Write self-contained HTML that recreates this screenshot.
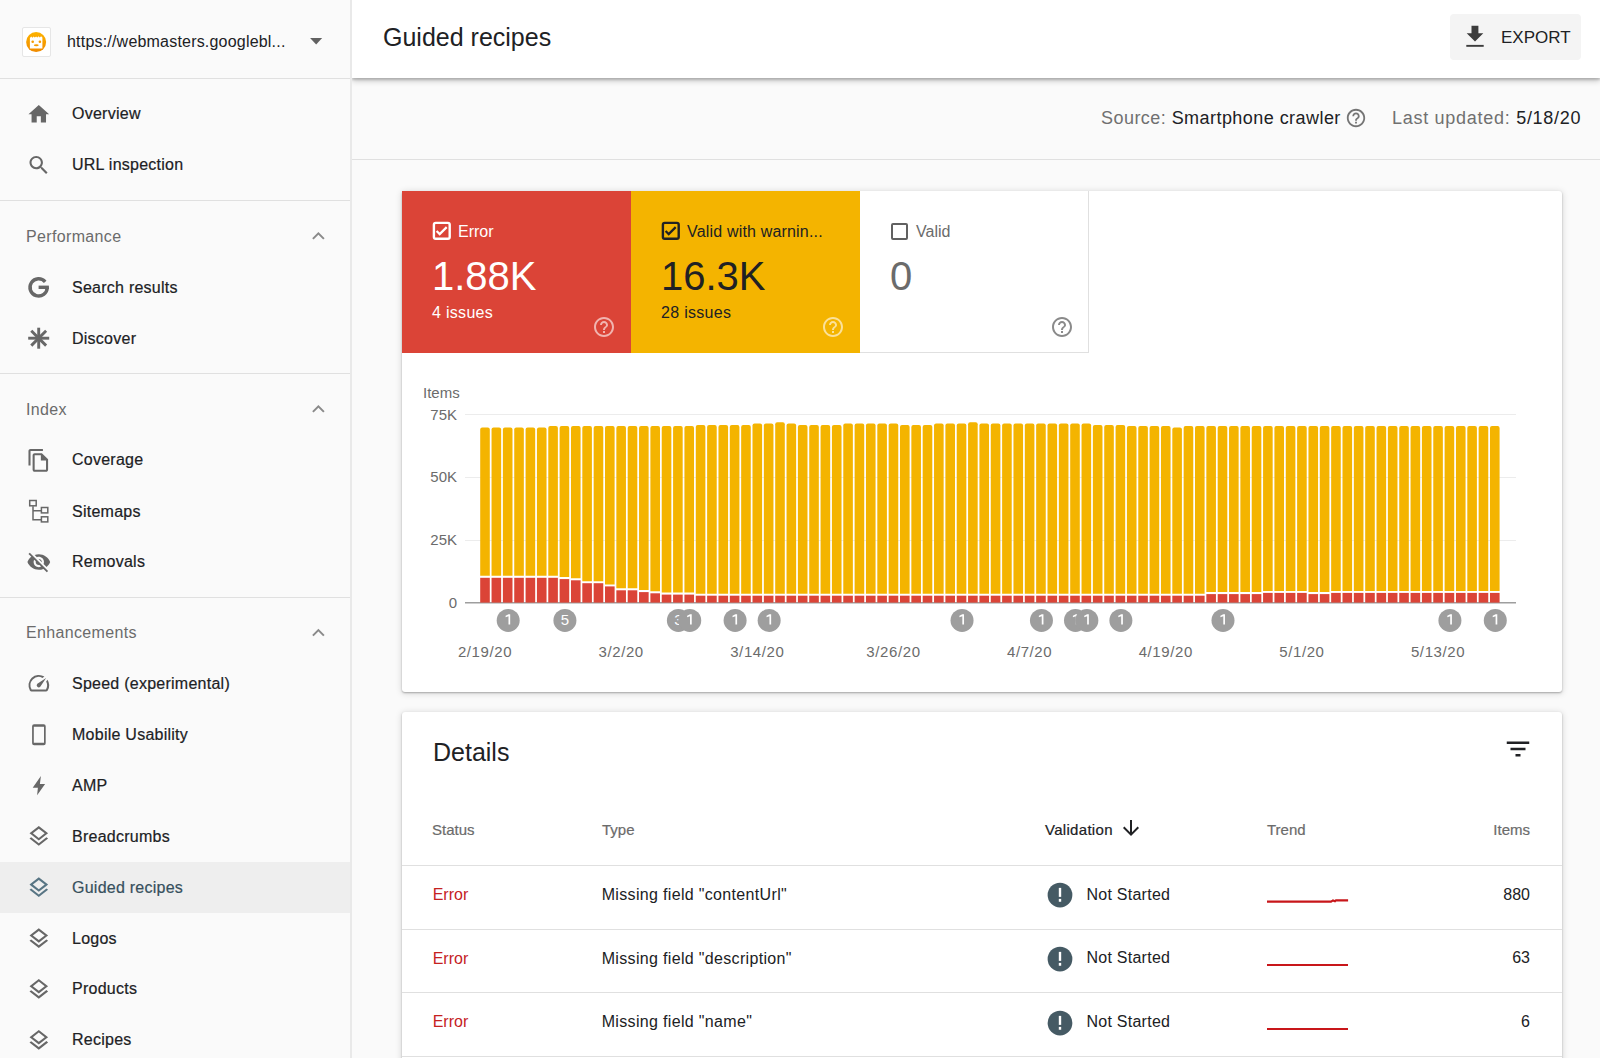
<!DOCTYPE html>
<html><head><meta charset="utf-8">
<style>
*{margin:0;padding:0;box-sizing:border-box}
html,body{width:1600px;height:1058px;overflow:hidden;background:#fafafa;font-family:"Liberation Sans",sans-serif;color:#202124}
.a{position:absolute;white-space:nowrap}
svg.i{position:absolute;fill:#616161}
#side{position:absolute;z-index:2;left:0;top:0;width:352px;height:1058px;background:#fafafa;border-right:2px solid #e9e9e9}
.hr{position:absolute;left:0;width:350px;height:1px;background:#e0e0e0}
.nav{position:absolute;left:72px;font-size:16px;line-height:20px;color:#202124;-webkit-text-stroke:0.2px #202124;letter-spacing:0.25px}
.sec{position:absolute;left:26px;font-size:16px;line-height:20px;color:#6b6b6b;letter-spacing:0.35px}
#hdr{position:absolute;left:352px;top:0;width:1248px;height:78px;background:#fff;box-shadow:0 2px 2px rgba(0,0,0,.16),0 3px 6px rgba(0,0,0,.2);z-index:1}
.card{position:absolute;background:#fff;box-shadow:0 1px 2px 0 rgba(0,0,0,.28),0 1px 6px 1px rgba(0,0,0,.12);border-radius:3px}
</style></head><body>
<div id="side">
  <div class="a" style="left:22px;top:27px;width:29px;height:30px;background:#fff;border:1px solid #e6e6e6;border-radius:2px"></div>
  <svg class="a" style="left:18px;top:22px" width="40" height="40" viewBox="18 22 40 40"><defs><linearGradient id="lg" x1="0" y1="0" x2="0" y2="1"><stop offset="0" stop-color="#fdb300"/><stop offset="1" stop-color="#f08a00"/></linearGradient></defs><circle cx="36.15" cy="42.1" r="10" fill="url(#lg)"/><path d="M29.9 48.6V37.9l1.3-1.3 1.2 1.1 1.2-1.2 1.2 1.1 1.3-1.2 1.2 1.1 1.3-1.2 1.2 1.1 1.3-1.2 1.3 1.3V48.6z" fill="#fff"/><circle cx="32.7" cy="41.7" r="1.3" fill="#f59a00"/><circle cx="39.9" cy="41.7" r="1.3" fill="#f59a00"/><ellipse cx="36.3" cy="45.25" rx="2.4" ry="1.05" fill="#f59a00"/></svg>
  <div class="a" style="left:67px;top:31.5px;font-size:16px;line-height:20px;letter-spacing:0.2px">https://webmasters.googlebl...</div>
  <svg class="i" style="left:304px;top:28px" width="24" height="24" viewBox="0 0 24 24"><path d="M7 10l5 5 5-5z"/></svg>
  <div class="hr" style="top:78px"></div>

  <div class="nav" style="top:104.4px;color:#202124;-webkit-text-stroke-color:#202124">Overview</div>
<div class="nav" style="top:155.4px;color:#202124;-webkit-text-stroke-color:#202124">URL inspection</div>
<div class="hr" style="top:200px"></div>
<div class="sec" style="top:226.7px">Performance</div>
<div class="nav" style="top:278.1px;color:#202124;-webkit-text-stroke-color:#202124">Search results</div>
<div class="nav" style="top:329.1px;color:#202124;-webkit-text-stroke-color:#202124">Discover</div>
<div class="hr" style="top:373px"></div>
<div class="sec" style="top:399.7px">Index</div>
<div class="nav" style="top:450.4px;color:#202124;-webkit-text-stroke-color:#202124">Coverage</div>
<div class="nav" style="top:501.8px;color:#202124;-webkit-text-stroke-color:#202124">Sitemaps</div>
<div class="nav" style="top:552.4px;color:#202124;-webkit-text-stroke-color:#202124">Removals</div>
<div class="hr" style="top:597px"></div>
<div class="sec" style="top:623.4px">Enhancements</div>
<div class="nav" style="top:674.1px;color:#202124;-webkit-text-stroke-color:#202124">Speed (experimental)</div>
<div class="nav" style="top:725.2px;color:#202124;-webkit-text-stroke-color:#202124">Mobile Usability</div>
<div class="nav" style="top:775.9px;color:#202124;-webkit-text-stroke-color:#202124">AMP</div>
<div class="nav" style="top:827.0px;color:#202124;-webkit-text-stroke-color:#202124">Breadcrumbs</div>
<div class="a" style="left:0;top:861.7px;width:350px;height:51px;background:#eeeeee"></div>
<div class="nav" style="top:877.6px;color:#37505d;-webkit-text-stroke-color:#37505d">Guided recipes</div>
<div class="nav" style="top:928.7px;color:#202124;-webkit-text-stroke-color:#202124">Logos</div>
<div class="nav" style="top:979.4px;color:#202124;-webkit-text-stroke-color:#202124">Products</div>
<div class="nav" style="top:1030.4px;color:#202124;-webkit-text-stroke-color:#202124">Recipes</div>
<svg class="a" style="left:0;top:0" width="350" height="1058" viewBox="0 0 350 1058"><g transform="translate(26.4 101.8) scale(1.033)" fill="#676767" ><path d="M10 20v-6h4v6h5v-8h3L12 3 2 12h3v8z"/></g><g transform="translate(26.4 152.8) scale(1.033)" fill="#676767" ><path d="M15.5 14h-.79l-.28-.27C15.41 12.59 16 11.11 16 9.5 16 5.91 13.09 3 9.5 3S3 5.91 3 9.5 5.91 16 9.5 16c1.61 0 3.09-.59 4.23-1.57l.27.28v.79l5 4.99L20.49 19l-4.99-5zm-6 0C7.01 14 5 11.99 5 9.5S7.01 5 9.5 5 14 7.01 14 9.5 11.99 14 9.5 14z"/></g><path d="M312.9 238.9L318.4 233.4L323.9 238.9" fill="none" stroke="#8a8a8a" stroke-width="2"/><g fill="none" stroke="#676767" stroke-width="3.4"><path d="M47.20 287.40A8.6 8.6 0 1 1 45.19 281.87"/></g><rect x="38.60" y="285.60" width="10.30" height="3.4" fill="#676767"/><rect x="37.25" y="327.70" width="2.9" height="21" fill="#676767" transform="rotate(0 38.7 338.2)"/><rect x="37.25" y="327.70" width="2.9" height="21" fill="#676767" transform="rotate(45 38.7 338.2)"/><rect x="37.25" y="327.70" width="2.9" height="21" fill="#676767" transform="rotate(90 38.7 338.2)"/><rect x="37.25" y="327.70" width="2.9" height="21" fill="#676767" transform="rotate(135 38.7 338.2)"/><path d="M312.9 411.9L318.4 406.4L323.9 411.9" fill="none" stroke="#8a8a8a" stroke-width="2"/><g transform="translate(26.4 448) scale(1.033)" fill="#676767" ><path d="M16 1H4c-1.1 0-2 .9-2 2v14h2V3h12V1zm-1 4H8c-1.1 0-1.99.9-1.99 2L6 21c0 1.1.89 2 1.99 2H19c1.1 0 2-.9 2-2V11l-6-6zM8 21V7h6v5h5v9H8z"/></g><g fill="none" stroke="#676767" stroke-width="1.5"><rect x="29.7" y="500.5" width="6.5" height="5.3"/><rect x="41.4" y="507.5" width="6.4" height="5.4"/><rect x="41.4" y="516.8" width="6.4" height="5.1"/><path d="M33 506.2V519.7H41.4M33 510.7H41.4"/></g><g transform="translate(26.4 549.6) scale(1.033)" fill="#676767" ><path d="M12 7c2.76 0 5 2.24 5 5 0 .65-.13 1.26-.36 1.83l2.92 2.92c1.51-1.26 2.7-2.89 3.43-4.75-1.73-4.39-6-7.5-11-7.5-1.4 0-2.74.25-3.98.7l2.16 2.16C10.74 7.13 11.35 7 12 7zM2 4.27l2.28 2.28.46.46C3.08 8.3 1.78 10.02 1 12c1.73 4.39 6 7.5 11 7.5 1.55 0 3.03-.3 4.38-.84l.42.42L19.73 22 21 20.73 3.27 3 2 4.27zM7.53 9.8l1.55 1.55c-.05.21-.08.43-.08.65 0 1.66 1.34 3 3 3 .22 0 .44-.03.65-.08l1.55 1.55c-.67.33-1.41.53-2.2.53-2.76 0-5-2.24-5-5 0-.79.2-1.53.53-2.2zm4.31-.78l3.15 3.15.02-.16c0-1.66-1.34-3-3-3l-.17.01z"/></g><path d="M312.9 635.6L318.4 630.1L323.9 635.6" fill="none" stroke="#8a8a8a" stroke-width="2"/><g transform="translate(26.4 670.8) scale(1.033)" fill="#676767" ><path d="M20.38 8.57l-1.23 1.85a8 8 0 0 1-.22 7.58H5.07A8 8 0 0 1 15.58 6.85l1.85-1.23A10 10 0 0 0 3.35 19a2 2 0 0 0 1.72 1h13.85a2 2 0 0 0 1.74-1 10 10 0 0 0-.27-10.44zm-9.79 6.84a2 2 0 0 0 2.83 0l5.66-8.49-8.49 5.66a2 2 0 0 0 0 2.83z"/></g><path fill="#676767" fill-rule="evenodd" d="M34.1 724.3h9.6a2 2 0 0 1 2 2v16.9a2 2 0 0 1-2 2h-9.6a2 2 0 0 1-2-2v-16.9a2 2 0 0 1 2-2zM33.8 726.7v16.1h10.2v-16.1z"/><path fill="#676767" d="M40.9 776.1L32.7 787.8H37.9L37.1 795.2L45.1 783.9H39.9Z"/><g transform="translate(26.4 824) scale(1.033)" fill="#676767" ><path d="M11.99 18.54l-7.37-5.73L3 14.07l9 7 9-7-1.63-1.27zM12 16l7.36-5.73L21 9l-9-7-9 7 1.63 1.27L12 16zm0-11.47L17.74 9 12 13.47 6.26 9 12 4.53z"/></g><g transform="translate(26.4 875.3) scale(1.033)" fill="#587584" ><path d="M11.99 18.54l-7.37-5.73L3 14.07l9 7 9-7-1.63-1.27zM12 16l7.36-5.73L21 9l-9-7-9 7 1.63 1.27L12 16zm0-11.47L17.74 9 12 13.47 6.26 9 12 4.53z"/></g><g transform="translate(26.4 926.2) scale(1.033)" fill="#676767" ><path d="M11.99 18.54l-7.37-5.73L3 14.07l9 7 9-7-1.63-1.27zM12 16l7.36-5.73L21 9l-9-7-9 7 1.63 1.27L12 16zm0-11.47L17.74 9 12 13.47 6.26 9 12 4.53z"/></g><g transform="translate(26.4 976.9) scale(1.033)" fill="#676767" ><path d="M11.99 18.54l-7.37-5.73L3 14.07l9 7 9-7-1.63-1.27zM12 16l7.36-5.73L21 9l-9-7-9 7 1.63 1.27L12 16zm0-11.47L17.74 9 12 13.47 6.26 9 12 4.53z"/></g><g transform="translate(26.4 1027.9) scale(1.033)" fill="#676767" ><path d="M11.99 18.54l-7.37-5.73L3 14.07l9 7 9-7-1.63-1.27zM12 16l7.36-5.73L21 9l-9-7-9 7 1.63 1.27L12 16zm0-11.47L17.74 9 12 13.47 6.26 9 12 4.53z"/></g><path d="M310.1 38.1H322.2L316.15 44.6Z" fill="#616161"/></svg>
</div>

<div id="hdr">
  <div class="a" style="left:31px;top:22.3px;font-size:25px;line-height:30px;color:#202124">Guided recipes</div>
  <div class="a" style="left:1098px;top:14px;width:130.5px;height:45.5px;background:#f4f4f4;border-radius:4px"></div>
  <svg class="i" style="left:1108px;top:20px;fill:#3c3c3c" width="30" height="30" viewBox="1460 20 30 30"><path d="M1471.5 25.8h6.9v7.5h4.9L1475 41.4L1466.7 33.3h4.8z"/><rect x="1466.3" y="44.9" width="17.4" height="1.9"/></svg>
  <div class="a" style="left:1149px;top:28px;font-size:17px;line-height:20px;letter-spacing:0px;color:#202124">EXPORT</div>
</div>

<div class="a" style="left:1101px;top:107px;font-size:18px;line-height:22px;color:#707070;letter-spacing:0.45px">Source: <span style="color:#202124">Smartphone crawler</span></div>
<svg class="i" style="left:1345px;top:107px;fill:#757575" width="22" height="22" viewBox="0 0 24 24"><path d="M11 18h2v-2h-2v2zm1-16C6.48 2 2 6.48 2 12s4.48 10 10 10 10-4.48 10-10S17.52 2 12 2zm0 18c-4.41 0-8-3.59-8-8s3.59-8 8-8 8 3.59 8 8-3.59 8-8 8zm0-14c-2.21 0-4 1.790-4 4h2c0-1.1.9-2 2-2s2 .9 2 2c0 2-3 1.75-3 5h2c0-2.250 3-2.500 3-5 0-2.21-1.79-4-4-4z"/></svg>
<div class="a" style="left:1392px;top:107px;font-size:18px;line-height:22px;color:#707070;letter-spacing:0.72px">Last updated: <span style="color:#202124">5/18/20</span></div>
<div class="a" style="left:351px;top:159px;width:1249px;height:1px;background:#e0e0e0"></div>

<!-- chart card -->
<div class="card" style="left:402px;top:191px;width:1160px;height:501px">
</div>
<div class="a" style="left:402px;top:191px;width:229px;height:162px;background:#db4437"></div>
<div class="a" style="left:631px;top:191px;width:229px;height:162px;background:#f4b400"></div>
<div class="a" style="left:860px;top:191px;width:229px;height:162px;border-right:1px solid #e0e0e0;border-bottom:1px solid #e0e0e0"></div>

<svg class="a" style="left:430px;top:219px" width="24" height="24" viewBox="0 0 24 24"><rect x="3.9" y="3.9" width="15.8" height="15.8" rx="1.8" fill="none" stroke="#fff" stroke-width="2.4"/><path d="M6.6 12l3.1 3.1 7-7" fill="none" stroke="#fff" stroke-width="2.2"/></svg>
<div class="a" style="left:458px;top:221.7px;font-size:16px;line-height:20px;color:#fff">Error</div>
<div class="a" style="left:432px;top:253px;font-size:40px;line-height:46px;color:#fff">1.88K</div>
<div class="a" style="left:432px;top:303px;font-size:16px;line-height:20px;color:#fff;letter-spacing:0.3px">4 issues</div>
<svg class="a" style="left:592px;top:315px;fill:rgba(255,255,255,.6)" width="24" height="24" viewBox="0 0 24 24"><path d="M11 18h2v-2h-2v2zm1-16C6.48 2 2 6.480 2 12s4.48 10 10 10 10-4.48 10-10S17.52 2 12 2zm0 18c-4.41 0-8-3.59-8-8s3.590-8 8-8 8 3.59 8 8-3.59 8-8 8zm0-14c-2.21 0-4 1.79-4 4h2c0-1.1.9-2 2-2s2 .9 2 2c0 2-3 1.75-3 5h2c0-2.25 3-2.5 3-5 0-2.21-1.79-4-4-4z"/></svg>

<svg class="a" style="left:659px;top:219px" width="24" height="24" viewBox="0 0 24 24"><rect x="3.9" y="3.9" width="15.8" height="15.8" rx="1.8" fill="none" stroke="#202124" stroke-width="2.4"/><path d="M6.6 12l3.1 3.1 7-7" fill="none" stroke="#202124" stroke-width="2.2"/></svg>
<div class="a" style="left:687px;top:221.7px;font-size:16px;line-height:20px;color:#202124;letter-spacing:0.18px">Valid with warnin...</div>
<div class="a" style="left:661px;top:253px;font-size:40px;line-height:46px;color:#202124">16.3K</div>
<div class="a" style="left:661px;top:303px;font-size:16px;line-height:20px;color:#202124;letter-spacing:0.3px">28 issues</div>
<svg class="a" style="left:821px;top:315px;fill:rgba(255,255,255,.6)" width="24" height="24" viewBox="0 0 24 24"><path d="M11 18h2v-2h-2v2zm1-16C6.48 2 2 6.48 2 12s4.48 10 10 10 10-4.48 10-10S17.52 2 12 2zm0 18c-4.41 0-8-3.59-8-8s3.59-8 8-8 8 3.59 8 8-3.59 8-8 8zm0-14c-2.21 0-4 1.79-4 4h2c0-1.1.9-2 2-2s2 .9 2 2c0 2-3 1.75-3 5h2c0-2.25 3-2.5 3-5 0-2.21-1.79-4-4-4z"/></svg>

<div class="a" style="left:891px;top:223px;width:17px;height:17px;border:2px solid #616161;border-radius:2px"></div>
<div class="a" style="left:916px;top:221.7px;font-size:16px;line-height:20px;color:#6b6b6b">Valid</div>
<div class="a" style="left:890px;top:253px;font-size:40px;line-height:46px;color:#6b6b6b">0</div>
<svg class="a" style="left:1050px;top:315px;fill:#8a8a8a" width="24" height="24" viewBox="0 0 24 24"><path d="M11 18h2v-2h-2v2zm1-16C6.48 2 2 6.48 2 12s4.48 10 10 10 10-4.48 10-10S17.52 2 12 2zm0 18c-4.41 0-8-3.59-8-8s3.59-8 8-8 8 3.59 8 8-3.59 8-8 8zm0-14c-2.21 0-4 1.79-4 4h2c0-1.1.9-2 2-2s2 .9 2 2c0 2-3 1.75-3 5h2c0-2.25 3-2.5 3-5 0-2.21-1.79-4-4-4z"/></svg>

<svg class="a" style="left:0;top:0" width="1600" height="1058" viewBox="0 0 1600 1058" font-family="Liberation Sans">
  <g fill="#6b6b6b" font-size="15">
    <text x="423" y="398">Items</text>
    <text x="457" y="420" text-anchor="end">75K</text>
    <text x="457" y="482" text-anchor="end">50K</text>
    <text x="457" y="545" text-anchor="end">25K</text>
    <text x="457" y="608" text-anchor="end">0</text>
  </g>
  <g fill="#ececec">
    <rect x="465" y="414" width="1051" height="1"/>
    <rect x="465" y="477" width="1051" height="1"/>
    <rect x="465" y="540" width="1051" height="1"/>
  </g>
  <rect x="465" y="602" width="1051" height="1.5" fill="#9e9e9e"/>
  <path d="M480.20 575.80V429.50q0 -2 2 -2h5.60q2 0 2 2V575.80z" fill="#f4b400"/>
<rect x="480.20" y="577.80" width="9.6" height="24.80" fill="#db4437"/>
<path d="M491.55 575.80V429.50q0 -2 2 -2h5.60q2 0 2 2V575.80z" fill="#f4b400"/>
<rect x="491.55" y="577.80" width="9.6" height="24.80" fill="#db4437"/>
<path d="M502.89 575.80V429.50q0 -2 2 -2h5.60q2 0 2 2V575.80z" fill="#f4b400"/>
<rect x="502.89" y="577.80" width="9.6" height="24.80" fill="#db4437"/>
<path d="M514.24 575.80V429.50q0 -2 2 -2h5.60q2 0 2 2V575.80z" fill="#f4b400"/>
<rect x="514.24" y="577.80" width="9.6" height="24.80" fill="#db4437"/>
<path d="M525.58 575.80V429.50q0 -2 2 -2h5.60q2 0 2 2V575.80z" fill="#f4b400"/>
<rect x="525.58" y="577.80" width="9.6" height="24.80" fill="#db4437"/>
<path d="M536.93 575.80V429.50q0 -2 2 -2h5.60q2 0 2 2V575.80z" fill="#f4b400"/>
<rect x="536.93" y="577.80" width="9.6" height="24.80" fill="#db4437"/>
<path d="M548.28 575.80V428.00q0 -2 2 -2h5.60q2 0 2 2V575.80z" fill="#f4b400"/>
<rect x="548.28" y="577.80" width="9.6" height="24.80" fill="#db4437"/>
<path d="M559.62 577.10V428.00q0 -2 2 -2h5.60q2 0 2 2V577.10z" fill="#f4b400"/>
<rect x="559.62" y="579.10" width="9.6" height="23.50" fill="#db4437"/>
<path d="M570.97 578.30V428.00q0 -2 2 -2h5.60q2 0 2 2V578.30z" fill="#f4b400"/>
<rect x="570.97" y="580.30" width="9.6" height="22.30" fill="#db4437"/>
<path d="M582.31 581.20V428.00q0 -2 2 -2h5.60q2 0 2 2V581.20z" fill="#f4b400"/>
<rect x="582.31" y="583.20" width="9.6" height="19.40" fill="#db4437"/>
<path d="M593.66 581.20V428.00q0 -2 2 -2h5.60q2 0 2 2V581.20z" fill="#f4b400"/>
<rect x="593.66" y="583.20" width="9.6" height="19.40" fill="#db4437"/>
<path d="M605.01 584.40V428.00q0 -2 2 -2h5.60q2 0 2 2V584.40z" fill="#f4b400"/>
<rect x="605.01" y="586.40" width="9.6" height="16.20" fill="#db4437"/>
<path d="M616.35 588.30V428.00q0 -2 2 -2h5.60q2 0 2 2V588.30z" fill="#f4b400"/>
<rect x="616.35" y="590.30" width="9.6" height="12.30" fill="#db4437"/>
<path d="M627.70 588.30V428.00q0 -2 2 -2h5.60q2 0 2 2V588.30z" fill="#f4b400"/>
<rect x="627.70" y="590.30" width="9.6" height="12.30" fill="#db4437"/>
<path d="M639.04 590.10V428.00q0 -2 2 -2h5.60q2 0 2 2V590.10z" fill="#f4b400"/>
<rect x="639.04" y="592.10" width="9.6" height="10.50" fill="#db4437"/>
<path d="M650.39 591.30V428.00q0 -2 2 -2h5.60q2 0 2 2V591.30z" fill="#f4b400"/>
<rect x="650.39" y="593.30" width="9.6" height="9.30" fill="#db4437"/>
<path d="M661.74 592.60V428.00q0 -2 2 -2h5.60q2 0 2 2V592.60z" fill="#f4b400"/>
<rect x="661.74" y="594.60" width="9.6" height="8.00" fill="#db4437"/>
<path d="M673.08 592.60V428.00q0 -2 2 -2h5.60q2 0 2 2V592.60z" fill="#f4b400"/>
<rect x="673.08" y="594.60" width="9.6" height="8.00" fill="#db4437"/>
<path d="M684.43 592.60V428.00q0 -2 2 -2h5.60q2 0 2 2V592.60z" fill="#f4b400"/>
<rect x="684.43" y="594.60" width="9.6" height="8.00" fill="#db4437"/>
<path d="M695.77 593.70V427.00q0 -2 2 -2h5.60q2 0 2 2V593.70z" fill="#f4b400"/>
<rect x="695.77" y="595.70" width="9.6" height="6.90" fill="#db4437"/>
<path d="M707.12 593.70V427.00q0 -2 2 -2h5.60q2 0 2 2V593.70z" fill="#f4b400"/>
<rect x="707.12" y="595.70" width="9.6" height="6.90" fill="#db4437"/>
<path d="M718.47 593.70V427.00q0 -2 2 -2h5.60q2 0 2 2V593.70z" fill="#f4b400"/>
<rect x="718.47" y="595.70" width="9.6" height="6.90" fill="#db4437"/>
<path d="M729.81 593.70V427.00q0 -2 2 -2h5.60q2 0 2 2V593.70z" fill="#f4b400"/>
<rect x="729.81" y="595.70" width="9.6" height="6.90" fill="#db4437"/>
<path d="M741.16 593.70V427.00q0 -2 2 -2h5.60q2 0 2 2V593.70z" fill="#f4b400"/>
<rect x="741.16" y="595.70" width="9.6" height="6.90" fill="#db4437"/>
<path d="M752.50 593.70V425.60q0 -2 2 -2h5.60q2 0 2 2V593.70z" fill="#f4b400"/>
<rect x="752.50" y="595.70" width="9.6" height="6.90" fill="#db4437"/>
<path d="M763.85 593.70V425.60q0 -2 2 -2h5.60q2 0 2 2V593.70z" fill="#f4b400"/>
<rect x="763.85" y="595.70" width="9.6" height="6.90" fill="#db4437"/>
<path d="M775.20 593.70V424.30q0 -2 2 -2h5.60q2 0 2 2V593.70z" fill="#f4b400"/>
<rect x="775.20" y="595.70" width="9.6" height="6.90" fill="#db4437"/>
<path d="M786.54 593.70V425.60q0 -2 2 -2h5.60q2 0 2 2V593.70z" fill="#f4b400"/>
<rect x="786.54" y="595.70" width="9.6" height="6.90" fill="#db4437"/>
<path d="M797.89 593.70V427.00q0 -2 2 -2h5.60q2 0 2 2V593.70z" fill="#f4b400"/>
<rect x="797.89" y="595.70" width="9.6" height="6.90" fill="#db4437"/>
<path d="M809.23 593.70V427.00q0 -2 2 -2h5.60q2 0 2 2V593.70z" fill="#f4b400"/>
<rect x="809.23" y="595.70" width="9.6" height="6.90" fill="#db4437"/>
<path d="M820.58 593.70V427.00q0 -2 2 -2h5.60q2 0 2 2V593.70z" fill="#f4b400"/>
<rect x="820.58" y="595.70" width="9.6" height="6.90" fill="#db4437"/>
<path d="M831.93 593.70V427.00q0 -2 2 -2h5.60q2 0 2 2V593.70z" fill="#f4b400"/>
<rect x="831.93" y="595.70" width="9.6" height="6.90" fill="#db4437"/>
<path d="M843.27 593.70V425.60q0 -2 2 -2h5.60q2 0 2 2V593.70z" fill="#f4b400"/>
<rect x="843.27" y="595.70" width="9.6" height="6.90" fill="#db4437"/>
<path d="M854.62 593.70V425.60q0 -2 2 -2h5.60q2 0 2 2V593.70z" fill="#f4b400"/>
<rect x="854.62" y="595.70" width="9.6" height="6.90" fill="#db4437"/>
<path d="M865.96 593.70V425.60q0 -2 2 -2h5.60q2 0 2 2V593.70z" fill="#f4b400"/>
<rect x="865.96" y="595.70" width="9.6" height="6.90" fill="#db4437"/>
<path d="M877.31 593.70V425.60q0 -2 2 -2h5.60q2 0 2 2V593.70z" fill="#f4b400"/>
<rect x="877.31" y="595.70" width="9.6" height="6.90" fill="#db4437"/>
<path d="M888.66 593.70V425.60q0 -2 2 -2h5.60q2 0 2 2V593.70z" fill="#f4b400"/>
<rect x="888.66" y="595.70" width="9.6" height="6.90" fill="#db4437"/>
<path d="M900.00 593.70V427.00q0 -2 2 -2h5.60q2 0 2 2V593.70z" fill="#f4b400"/>
<rect x="900.00" y="595.70" width="9.6" height="6.90" fill="#db4437"/>
<path d="M911.35 593.70V427.00q0 -2 2 -2h5.60q2 0 2 2V593.70z" fill="#f4b400"/>
<rect x="911.35" y="595.70" width="9.6" height="6.90" fill="#db4437"/>
<path d="M922.69 593.70V427.00q0 -2 2 -2h5.60q2 0 2 2V593.70z" fill="#f4b400"/>
<rect x="922.69" y="595.70" width="9.6" height="6.90" fill="#db4437"/>
<path d="M934.04 593.70V425.60q0 -2 2 -2h5.60q2 0 2 2V593.70z" fill="#f4b400"/>
<rect x="934.04" y="595.70" width="9.6" height="6.90" fill="#db4437"/>
<path d="M945.39 593.70V425.60q0 -2 2 -2h5.60q2 0 2 2V593.70z" fill="#f4b400"/>
<rect x="945.39" y="595.70" width="9.6" height="6.90" fill="#db4437"/>
<path d="M956.73 593.70V425.60q0 -2 2 -2h5.60q2 0 2 2V593.70z" fill="#f4b400"/>
<rect x="956.73" y="595.70" width="9.6" height="6.90" fill="#db4437"/>
<path d="M968.08 593.70V424.30q0 -2 2 -2h5.60q2 0 2 2V593.70z" fill="#f4b400"/>
<rect x="968.08" y="595.70" width="9.6" height="6.90" fill="#db4437"/>
<path d="M979.42 593.70V425.60q0 -2 2 -2h5.60q2 0 2 2V593.70z" fill="#f4b400"/>
<rect x="979.42" y="595.70" width="9.6" height="6.90" fill="#db4437"/>
<path d="M990.77 593.70V425.60q0 -2 2 -2h5.60q2 0 2 2V593.70z" fill="#f4b400"/>
<rect x="990.77" y="595.70" width="9.6" height="6.90" fill="#db4437"/>
<path d="M1002.12 593.70V425.60q0 -2 2 -2h5.60q2 0 2 2V593.70z" fill="#f4b400"/>
<rect x="1002.12" y="595.70" width="9.6" height="6.90" fill="#db4437"/>
<path d="M1013.46 593.70V425.60q0 -2 2 -2h5.60q2 0 2 2V593.70z" fill="#f4b400"/>
<rect x="1013.46" y="595.70" width="9.6" height="6.90" fill="#db4437"/>
<path d="M1024.81 593.70V425.60q0 -2 2 -2h5.60q2 0 2 2V593.70z" fill="#f4b400"/>
<rect x="1024.81" y="595.70" width="9.6" height="6.90" fill="#db4437"/>
<path d="M1036.15 593.70V425.60q0 -2 2 -2h5.60q2 0 2 2V593.70z" fill="#f4b400"/>
<rect x="1036.15" y="595.70" width="9.6" height="6.90" fill="#db4437"/>
<path d="M1047.50 593.70V425.60q0 -2 2 -2h5.60q2 0 2 2V593.70z" fill="#f4b400"/>
<rect x="1047.50" y="595.70" width="9.6" height="6.90" fill="#db4437"/>
<path d="M1058.85 593.70V425.60q0 -2 2 -2h5.60q2 0 2 2V593.70z" fill="#f4b400"/>
<rect x="1058.85" y="595.70" width="9.6" height="6.90" fill="#db4437"/>
<path d="M1070.19 593.70V425.60q0 -2 2 -2h5.60q2 0 2 2V593.70z" fill="#f4b400"/>
<rect x="1070.19" y="595.70" width="9.6" height="6.90" fill="#db4437"/>
<path d="M1081.54 593.70V425.60q0 -2 2 -2h5.60q2 0 2 2V593.70z" fill="#f4b400"/>
<rect x="1081.54" y="595.70" width="9.6" height="6.90" fill="#db4437"/>
<path d="M1092.88 593.70V427.00q0 -2 2 -2h5.60q2 0 2 2V593.70z" fill="#f4b400"/>
<rect x="1092.88" y="595.70" width="9.6" height="6.90" fill="#db4437"/>
<path d="M1104.23 593.70V427.00q0 -2 2 -2h5.60q2 0 2 2V593.70z" fill="#f4b400"/>
<rect x="1104.23" y="595.70" width="9.6" height="6.90" fill="#db4437"/>
<path d="M1115.58 593.70V427.00q0 -2 2 -2h5.60q2 0 2 2V593.70z" fill="#f4b400"/>
<rect x="1115.58" y="595.70" width="9.6" height="6.90" fill="#db4437"/>
<path d="M1126.92 593.70V428.00q0 -2 2 -2h5.60q2 0 2 2V593.70z" fill="#f4b400"/>
<rect x="1126.92" y="595.70" width="9.6" height="6.90" fill="#db4437"/>
<path d="M1138.27 593.70V428.00q0 -2 2 -2h5.60q2 0 2 2V593.70z" fill="#f4b400"/>
<rect x="1138.27" y="595.70" width="9.6" height="6.90" fill="#db4437"/>
<path d="M1149.61 593.70V428.00q0 -2 2 -2h5.60q2 0 2 2V593.70z" fill="#f4b400"/>
<rect x="1149.61" y="595.70" width="9.6" height="6.90" fill="#db4437"/>
<path d="M1160.96 593.70V428.00q0 -2 2 -2h5.60q2 0 2 2V593.70z" fill="#f4b400"/>
<rect x="1160.96" y="595.70" width="9.6" height="6.90" fill="#db4437"/>
<path d="M1172.31 593.70V429.50q0 -2 2 -2h5.60q2 0 2 2V593.70z" fill="#f4b400"/>
<rect x="1172.31" y="595.70" width="9.6" height="6.90" fill="#db4437"/>
<path d="M1183.65 593.70V428.00q0 -2 2 -2h5.60q2 0 2 2V593.70z" fill="#f4b400"/>
<rect x="1183.65" y="595.70" width="9.6" height="6.90" fill="#db4437"/>
<path d="M1195.00 593.70V428.00q0 -2 2 -2h5.60q2 0 2 2V593.70z" fill="#f4b400"/>
<rect x="1195.00" y="595.70" width="9.6" height="6.90" fill="#db4437"/>
<path d="M1206.34 592.10V428.00q0 -2 2 -2h5.60q2 0 2 2V592.10z" fill="#f4b400"/>
<rect x="1206.34" y="594.10" width="9.6" height="8.50" fill="#db4437"/>
<path d="M1217.69 592.10V428.00q0 -2 2 -2h5.60q2 0 2 2V592.10z" fill="#f4b400"/>
<rect x="1217.69" y="594.10" width="9.6" height="8.50" fill="#db4437"/>
<path d="M1229.04 592.10V428.00q0 -2 2 -2h5.60q2 0 2 2V592.10z" fill="#f4b400"/>
<rect x="1229.04" y="594.10" width="9.6" height="8.50" fill="#db4437"/>
<path d="M1240.38 592.10V428.00q0 -2 2 -2h5.60q2 0 2 2V592.10z" fill="#f4b400"/>
<rect x="1240.38" y="594.10" width="9.6" height="8.50" fill="#db4437"/>
<path d="M1251.73 592.10V428.00q0 -2 2 -2h5.60q2 0 2 2V592.10z" fill="#f4b400"/>
<rect x="1251.73" y="594.10" width="9.6" height="8.50" fill="#db4437"/>
<path d="M1263.07 590.90V428.00q0 -2 2 -2h5.60q2 0 2 2V590.90z" fill="#f4b400"/>
<rect x="1263.07" y="592.90" width="9.6" height="9.70" fill="#db4437"/>
<path d="M1274.42 590.90V428.00q0 -2 2 -2h5.60q2 0 2 2V590.90z" fill="#f4b400"/>
<rect x="1274.42" y="592.90" width="9.6" height="9.70" fill="#db4437"/>
<path d="M1285.77 590.90V428.00q0 -2 2 -2h5.60q2 0 2 2V590.90z" fill="#f4b400"/>
<rect x="1285.77" y="592.90" width="9.6" height="9.70" fill="#db4437"/>
<path d="M1297.11 590.90V428.00q0 -2 2 -2h5.60q2 0 2 2V590.90z" fill="#f4b400"/>
<rect x="1297.11" y="592.90" width="9.6" height="9.70" fill="#db4437"/>
<path d="M1308.46 592.10V428.00q0 -2 2 -2h5.60q2 0 2 2V592.10z" fill="#f4b400"/>
<rect x="1308.46" y="594.10" width="9.6" height="8.50" fill="#db4437"/>
<path d="M1319.80 592.10V428.00q0 -2 2 -2h5.60q2 0 2 2V592.10z" fill="#f4b400"/>
<rect x="1319.80" y="594.10" width="9.6" height="8.50" fill="#db4437"/>
<path d="M1331.15 590.90V428.00q0 -2 2 -2h5.60q2 0 2 2V590.90z" fill="#f4b400"/>
<rect x="1331.15" y="592.90" width="9.6" height="9.70" fill="#db4437"/>
<path d="M1342.50 590.90V428.00q0 -2 2 -2h5.60q2 0 2 2V590.90z" fill="#f4b400"/>
<rect x="1342.50" y="592.90" width="9.6" height="9.70" fill="#db4437"/>
<path d="M1353.84 590.90V428.00q0 -2 2 -2h5.60q2 0 2 2V590.90z" fill="#f4b400"/>
<rect x="1353.84" y="592.90" width="9.6" height="9.70" fill="#db4437"/>
<path d="M1365.19 590.90V428.00q0 -2 2 -2h5.60q2 0 2 2V590.90z" fill="#f4b400"/>
<rect x="1365.19" y="592.90" width="9.6" height="9.70" fill="#db4437"/>
<path d="M1376.53 590.90V428.00q0 -2 2 -2h5.60q2 0 2 2V590.90z" fill="#f4b400"/>
<rect x="1376.53" y="592.90" width="9.6" height="9.70" fill="#db4437"/>
<path d="M1387.88 590.90V428.00q0 -2 2 -2h5.60q2 0 2 2V590.90z" fill="#f4b400"/>
<rect x="1387.88" y="592.90" width="9.6" height="9.70" fill="#db4437"/>
<path d="M1399.23 590.90V428.00q0 -2 2 -2h5.60q2 0 2 2V590.90z" fill="#f4b400"/>
<rect x="1399.23" y="592.90" width="9.6" height="9.70" fill="#db4437"/>
<path d="M1410.57 590.90V428.00q0 -2 2 -2h5.60q2 0 2 2V590.90z" fill="#f4b400"/>
<rect x="1410.57" y="592.90" width="9.6" height="9.70" fill="#db4437"/>
<path d="M1421.92 590.90V428.00q0 -2 2 -2h5.60q2 0 2 2V590.90z" fill="#f4b400"/>
<rect x="1421.92" y="592.90" width="9.6" height="9.70" fill="#db4437"/>
<path d="M1433.26 590.90V428.00q0 -2 2 -2h5.60q2 0 2 2V590.90z" fill="#f4b400"/>
<rect x="1433.26" y="592.90" width="9.6" height="9.70" fill="#db4437"/>
<path d="M1444.61 590.90V428.00q0 -2 2 -2h5.60q2 0 2 2V590.90z" fill="#f4b400"/>
<rect x="1444.61" y="592.90" width="9.6" height="9.70" fill="#db4437"/>
<path d="M1455.96 590.90V428.00q0 -2 2 -2h5.60q2 0 2 2V590.90z" fill="#f4b400"/>
<rect x="1455.96" y="592.90" width="9.6" height="9.70" fill="#db4437"/>
<path d="M1467.30 590.90V428.00q0 -2 2 -2h5.60q2 0 2 2V590.90z" fill="#f4b400"/>
<rect x="1467.30" y="592.90" width="9.6" height="9.70" fill="#db4437"/>
<path d="M1478.65 590.90V428.00q0 -2 2 -2h5.60q2 0 2 2V590.90z" fill="#f4b400"/>
<rect x="1478.65" y="592.90" width="9.6" height="9.70" fill="#db4437"/>
<path d="M1489.99 590.90V428.00q0 -2 2 -2h5.60q2 0 2 2V590.90z" fill="#f4b400"/>
<rect x="1489.99" y="592.90" width="9.6" height="9.70" fill="#db4437"/>
  <circle cx="508.19" cy="620.4" r="11.5" fill="#9e9e9e"/><path d="M508.49 614.2h1.7v10.3h-1.7v-8.2l-2.9 1.05v-1.5z" fill="#fff"/>
<circle cx="564.92" cy="620.4" r="11.5" fill="#9e9e9e"/><text x="564.92" y="625.4" text-anchor="middle" font-size="15" fill="#fff">5</text>
<circle cx="678.38" cy="620.4" r="11.5" fill="#9e9e9e"/><text x="678.38" y="625.4" text-anchor="middle" font-size="15" fill="#fff">3</text>
<circle cx="689.73" cy="620.4" r="11.5" fill="#9e9e9e"/><path d="M690.03 614.2h1.7v10.3h-1.7v-8.2l-2.9 1.05v-1.5z" fill="#fff"/>
<circle cx="735.11" cy="620.4" r="11.5" fill="#9e9e9e"/><path d="M735.41 614.2h1.7v10.3h-1.7v-8.2l-2.9 1.05v-1.5z" fill="#fff"/>
<circle cx="769.15" cy="620.4" r="11.5" fill="#9e9e9e"/><path d="M769.45 614.2h1.7v10.3h-1.7v-8.2l-2.9 1.05v-1.5z" fill="#fff"/>
<circle cx="962.03" cy="620.4" r="11.5" fill="#9e9e9e"/><path d="M962.33 614.2h1.7v10.3h-1.7v-8.2l-2.9 1.05v-1.5z" fill="#fff"/>
<circle cx="1041.45" cy="620.4" r="11.5" fill="#9e9e9e"/><path d="M1041.75 614.2h1.7v10.3h-1.7v-8.2l-2.9 1.05v-1.5z" fill="#fff"/>
<circle cx="1075.49" cy="620.4" r="11.5" fill="#9e9e9e"/><path d="M1075.79 614.2h1.7v10.3h-1.7v-8.2l-2.9 1.05v-1.5z" fill="#fff"/>
<circle cx="1086.84" cy="620.4" r="11.5" fill="#9e9e9e"/><path d="M1087.14 614.2h1.7v10.3h-1.7v-8.2l-2.9 1.05v-1.5z" fill="#fff"/>
<circle cx="1120.88" cy="620.4" r="11.5" fill="#9e9e9e"/><path d="M1121.18 614.2h1.7v10.3h-1.7v-8.2l-2.9 1.05v-1.5z" fill="#fff"/>
<circle cx="1222.99" cy="620.4" r="11.5" fill="#9e9e9e"/><path d="M1223.29 614.2h1.7v10.3h-1.7v-8.2l-2.9 1.05v-1.5z" fill="#fff"/>
<circle cx="1449.91" cy="620.4" r="11.5" fill="#9e9e9e"/><path d="M1450.21 614.2h1.7v10.3h-1.7v-8.2l-2.9 1.05v-1.5z" fill="#fff"/>
<circle cx="1495.29" cy="620.4" r="11.5" fill="#9e9e9e"/><path d="M1495.59 614.2h1.7v10.3h-1.7v-8.2l-2.9 1.05v-1.5z" fill="#fff"/>
  <g fill="#6b6b6b" font-size="15" letter-spacing="0.6">
  <text x="485.00" y="657" text-anchor="middle">2/19/20</text>
<text x="621.15" y="657" text-anchor="middle">3/2/20</text>
<text x="757.30" y="657" text-anchor="middle">3/14/20</text>
<text x="893.46" y="657" text-anchor="middle">3/26/20</text>
<text x="1029.61" y="657" text-anchor="middle">4/7/20</text>
<text x="1165.76" y="657" text-anchor="middle">4/19/20</text>
<text x="1301.91" y="657" text-anchor="middle">5/1/20</text>
<text x="1438.06" y="657" text-anchor="middle">5/13/20</text>
  </g>
</svg>

<!-- details card -->
<div class="card" style="left:402px;top:712px;width:1160px;height:400px"></div>
<div class="a" style="left:433px;top:737px;font-size:25px;line-height:30px;color:#202124">Details</div>
<svg class="i" style="left:1503px;top:734px;fill:#202124" width="30" height="30" viewBox="0 0 24 24"><path d="M10 18h4v-2h-4v2zM3 6v2h18V6H3zm3 7h12v-2H6v2z"/></svg>
<div class="a" style="left:432px;top:819.5px;font-size:15px;line-height:20px;color:#6b6b6b;-webkit-text-stroke:0.2px #6b6b6b">Status</div>
<div class="a" style="left:602px;top:819.5px;font-size:15px;line-height:20px;color:#6b6b6b;-webkit-text-stroke:0.2px #6b6b6b">Type</div>
<div class="a" style="left:1045px;top:819.5px;font-size:15px;line-height:20px;color:#202124;-webkit-text-stroke:0.2px #202124;letter-spacing:0.3px">Validation</div>
<svg class="i" style="left:1119px;top:816px;fill:#202124" width="24" height="24" viewBox="0 0 24 24"><path d="M20 12l-1.41-1.41L13 16.17V4h-2v12.170l-5.58-5.59L4 12l8 8 8-8z"/></svg>
<div class="a" style="left:1267px;top:819.5px;font-size:15px;line-height:20px;color:#6b6b6b;-webkit-text-stroke:0.2px #6b6b6b">Trend</div>
<div class="a" style="left:1430px;width:100px;text-align:right;top:819.5px;font-size:15px;line-height:20px;color:#6b6b6b;-webkit-text-stroke:0.2px #6b6b6b">Items</div>
<div class="a" style="left:402px;top:865px;width:1160px;height:1px;background:#e0e0e0"></div>
<div class="a" style="left:432.7px;top:885.0px;font-size:16px;line-height:20px;color:#c5221f">Error</div>
<div class="a" style="left:601.7px;top:885.0px;font-size:16px;line-height:20px;color:#202124;letter-spacing:0.33px">Missing field "contentUrl"</div>
<svg class="a" style="left:1044.9px;top:880.4px" width="30" height="30" viewBox="0 0 24 24"><circle cx="12" cy="12" r="9.9" fill="#455a64"/><rect x="11.05" y="6.3" width="1.9" height="7.2" fill="#fff"/><rect x="11.05" y="15.1" width="1.9" height="2.3" fill="#fff"/></svg>
<div class="a" style="left:1086.5px;top:884.5px;font-size:16px;line-height:20px;color:#202124;letter-spacing:0.25px">Not Started</div>
<svg class="a" style="left:1260px;top:890.0px" width="100" height="20" viewBox="0 0 100 20"><path d="M7 11.6H71L73 10.4L75 11.2L76 10.3H88.1" fill="none" stroke="#c8161a" stroke-width="2.2"/></svg>
<div class="a" style="left:1430px;width:100px;text-align:right;top:884.5px;font-size:16px;line-height:20px;color:#202124">880</div>
<div class="a" style="left:402px;top:928.5px;width:1160px;height:1px;background:#e0e0e0"></div>
<div class="a" style="left:432.7px;top:948.6px;font-size:16px;line-height:20px;color:#c5221f">Error</div>
<div class="a" style="left:601.7px;top:948.6px;font-size:16px;line-height:20px;color:#202124;letter-spacing:0.33px">Missing field "description"</div>
<svg class="a" style="left:1044.9px;top:944.0px" width="30" height="30" viewBox="0 0 24 24"><circle cx="12" cy="12" r="9.9" fill="#455a64"/><rect x="11.05" y="6.3" width="1.9" height="7.2" fill="#fff"/><rect x="11.05" y="15.1" width="1.9" height="2.3" fill="#fff"/></svg>
<div class="a" style="left:1086.5px;top:948.1px;font-size:16px;line-height:20px;color:#202124;letter-spacing:0.25px">Not Started</div>
<div class="a" style="left:1267px;top:964.0px;width:81px;height:2.2px;background:#c8161a"></div>
<div class="a" style="left:1430px;width:100px;text-align:right;top:948.1px;font-size:16px;line-height:20px;color:#202124">63</div>
<div class="a" style="left:402px;top:992.1px;width:1160px;height:1px;background:#e0e0e0"></div>
<div class="a" style="left:432.7px;top:1012.2px;font-size:16px;line-height:20px;color:#c5221f">Error</div>
<div class="a" style="left:601.7px;top:1012.2px;font-size:16px;line-height:20px;color:#202124;letter-spacing:0.33px">Missing field "name"</div>
<svg class="a" style="left:1044.9px;top:1007.6px" width="30" height="30" viewBox="0 0 24 24"><circle cx="12" cy="12" r="9.9" fill="#455a64"/><rect x="11.05" y="6.3" width="1.9" height="7.2" fill="#fff"/><rect x="11.05" y="15.1" width="1.9" height="2.3" fill="#fff"/></svg>
<div class="a" style="left:1086.5px;top:1011.7px;font-size:16px;line-height:20px;color:#202124;letter-spacing:0.25px">Not Started</div>
<div class="a" style="left:1267px;top:1027.6px;width:81px;height:2.2px;background:#c8161a"></div>
<div class="a" style="left:1430px;width:100px;text-align:right;top:1011.7px;font-size:16px;line-height:20px;color:#202124">6</div>
<div class="a" style="left:402px;top:1055.7px;width:1160px;height:1px;background:#e0e0e0"></div>
</body></html>
